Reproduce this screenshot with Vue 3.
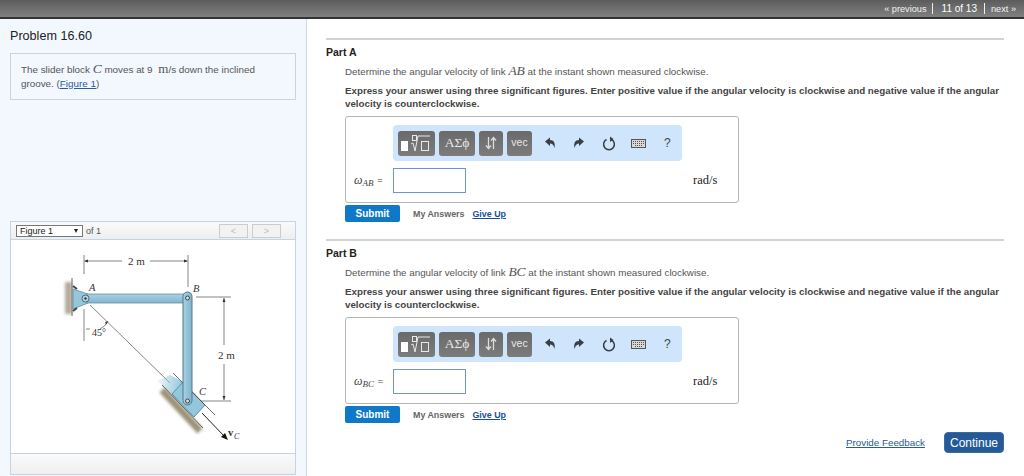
<template>
  <div class="page">
    <div class="topbar">
      <span class="nav-link">« previous</span>
      <span class="sep sep-first"></span>
      <span class="count">11 of 13</span>
      <span class="sep sep-last"></span>
      <span class="nav-link">next »</span>
    </div>

    <div class="columns">
      <aside class="left">
        <h1>Problem 16.60</h1>
        <div class="statement">
          The slider block <i class="math">C</i> moves at 9 <span class="unit">m</span>/s down the inclined
          groove. (<a class="link">Figure 1</a>)
        </div>

        <div class="figure">
          <div class="figure-head">
            <div class="select"><span>Figure 1</span><span class="caret"></span></div>
            <span class="of">of 1</span>
            <div class="pager">
              <button class="page-btn">&lt;</button>
              <button class="page-btn">&gt;</button>
            </div>
          </div>
          <div class="figure-body">
            <svg class="diagram" width="200" height="210" viewBox="0 0 200 210">
              <defs>
                <linearGradient id="fade" x1="0" y1="0" x2="1" y2="0.1">
                  <stop offset="0" stop-color="#94c6dc" stop-opacity="0.1" />
                  <stop offset="1" stop-color="#94c6dc" />
                </linearGradient>
                <linearGradient id="link-h" x1="0" y1="0" x2="0" y2="1">
                  <stop offset="0" stop-color="#a9d2e4" />
                  <stop offset="1" stop-color="#80b5cf" />
                </linearGradient>
                <linearGradient id="link-v" x1="0" y1="0" x2="1" y2="0">
                  <stop offset="0" stop-color="#a9d2e4" />
                  <stop offset="1" stop-color="#7fb3cc" />
                </linearGradient>
                <filter id="blur" x="-30%" y="-30%" width="160%" height="160%">
                  <feGaussianBlur stdDeviation="1.800" />
                </filter>
              </defs>
              <!-- dimensions on top -->
              <g stroke="#666" stroke-width="0.8" fill="none">
                <path d="M34 10V29M138 10V42M35 16H72M100 16H137" />
                <path d="M34 64V96M36 84H40" />
                <path d="M146 52H181M145 156H181M174 53V100M174 119V155" />
                <path d="M40 60L120 138" />
                <path d="M50 84Q55 82 58 76" />
              </g>
              <path d="M34 16l4-1.500v3zM138 16l-4-1.500v3zM174 53l-1.500 4h3zM174 155l-1.500-4h3zM58 76l-3 1.500 1.500 2z" fill="#333" />
              <!-- wall and pin bracket -->
              <rect x="15" y="37" width="7" height="32" fill="#b3ab9c" filter="url(#blur)" />
              <path d="M22 33V71" stroke="#666" stroke-width="1" />
              <path d="M23 44L38 49V58L23 64Z" fill="#94c6dc" stroke="#5f8ea3" stroke-width="0.8" />
              <path d="M23 41l4 3M23 66l4-3" stroke="#444" stroke-width="2" />
              <!-- slider groove -->
              <path d="M112 145L150 186" stroke="#9c9378" stroke-width="7" filter="url(#blur)" fill="none" />
              <path d="M107 136L120 130L133 137L122 149Z" fill="url(#fade)" />
              <path d="M122 149L133 137L155 160L144 172Z" fill="#94c6dc" stroke="#3f7f98" stroke-width="0.8" />
              <path d="M123 128L165 170M112 140L153 183" stroke="#444" stroke-width="0.8" fill="none" />
              <path d="M152 168L175 192" stroke="#222" stroke-width="1" />
              <path d="M178 195l-7-3 4-4z" fill="#111" />
              <!-- links -->
              <path d="M37 49H137V58H37Z" fill="url(#link-h)" stroke="#66909f" stroke-width="0.8" />
              <rect x="133" y="47" width="9" height="113" rx="4.500" fill="url(#link-v)" stroke="#50798a" stroke-width="1" />
              <circle cx="35.500" cy="53.500" r="3.500" fill="#b9d8e6" stroke="#4d6b78" />
              <circle cx="35.500" cy="53.500" r="1.200" fill="#333" />
              <circle cx="137.500" cy="53" r="2" fill="#ddd" stroke="#444" />
              <circle cx="137.500" cy="156" r="2" fill="#ddd" stroke="#444" />
              <!-- labels -->
              <g class="fig-text">
                <text x="78" y="20">2 m</text>
                <text x="168" y="114">2 m</text>
                <text class="fig-angle" x="42" y="91">45°</text>
                <text class="fig-it" x="39" y="46">A</text>
                <text class="fig-it" x="143" y="47">B</text>
                <text class="fig-it" x="149" y="150">C</text>
                <text class="fig-bold" x="178" y="191">v</text>
                <text class="fig-sub" x="184" y="194">C</text>
              </g>
            </svg>
          </div>
          <div class="figure-foot"></div>
        </div>
      </aside>

      <main class="right">
        <section v-for="part in parts" :key="part.name" class="part">
          <h2>Part {{ part.name }}</h2>
          <div class="part-body">
            <p class="question">
              Determine the angular velocity of link <i class="math">{{ part.link }}</i> at the instant shown measured clockwise.
            </p>
            <p class="instructions">
              Express your answer using three significant figures. Enter positive value if the angular velocity is clockwise and negative value if the angular velocity is counterclockwise.
            </p>
            <div class="answer-box">
              <div class="toolbar">
                <button class="tool tool-frac">
                  <span class="block"></span>
                  <svg width="22" height="19" viewBox="0 0 22 19" fill="none" stroke="#e8e8e8" stroke-width="1">
                    <rect x="2.500" y="1.500" width="4" height="5" />
                    <path d="M1 10l2 -1 2 8 3-15h12" />
                    <rect x="11.500" y="7.500" width="7" height="9" />
                  </svg>
                </button>
                <button class="tool tool-greek">ΑΣϕ</button>
                <button class="tool tool-arrows">
                  <svg width="12" height="14" viewBox="0 0 12 14" fill="none" stroke="#ddd" stroke-width="1.300">
                    <path d="M3.500 1V12M1 9.500l2.500 3 2.500-3M8.500 13V2M6 4.500l2.500-3 2.500 3" />
                  </svg>
                </button>
                <button class="tool tool-vec">vec</button>
                <svg class="act act-undo" width="12" height="12" viewBox="0 0 12 12"><path d="M1 4.500L6 0.500V3C10 3 11.500 6.500 10.500 11C9.500 7.500 8 6.500 6 6.500V9Z" fill="#3a3f45" /></svg>
                <svg class="act" width="12" height="12" viewBox="0 0 12 12"><path d="M11 4.500L6 0.500V3C2 3 0.500 6.500 1.500 11C2.500 7.500 4 6.500 6 6.500V9Z" fill="#3a3f45" /></svg>
                <svg class="act" width="14" height="15" viewBox="0 0 14 15" fill="none"><path d="M4.500 3.500A5.400 5.400 0 1 0 9.500 3.500" stroke="#3a3f45" stroke-width="1.500" /><path d="M8 0.500V6L11.500 3Z" fill="#3a3f45" /></svg>
                <svg class="act act-keys" width="15" height="9" viewBox="0 0 15 9"><rect x="0.500" y="0.500" width="14" height="8" fill="#d8d8d8" stroke="#555" /><path d="M2 2.500H13M2 4.500H13M4 6.500H11" stroke="#555" stroke-dasharray="1 1" /></svg>
                <span class="help">?</span>
              </div>
              <div class="answer-row">
                <span class="var"><i class="omega">ω</i><i class="sub">{{ part.link }}</i> =</span>
                <div class="input"></div>
                <span class="units">rad/s</span>
              </div>
            </div>
            <div class="actions">
              <button class="submit">Submit</button>
              <span class="my-answers">My Answers</span>
              <a class="link give-up">Give Up</a>
            </div>
          </div>
        </section>
        <div class="feedback">
          <a class="link">Provide Feedback</a>
          <button class="continue">Continue</button>
        </div>
      </main>
    </div>
  </div>
</template>

<script setup>
const parts = [
  { name: 'A', link: 'AB' },
  { name: 'B', link: 'BC' }
]
</script>

<style>
body {
  margin: 0;
  background: #fff;
}
</style>

<style scoped>
.page {
  width: 1024px;
  height: 476px;
  overflow: hidden;
  font-family: "Liberation Sans", Arial, sans-serif;
  color: #444;
}

.topbar {
  height: 17px;
  border-bottom: 2px solid #333;
  background: linear-gradient(#5c5c5c, #808080);
  display: flex;
  align-items: center;
  justify-content: flex-end;
  padding-right: 8px;
  font-size: 9.200px;
  color: #fff;
}

.nav-link {
  color: #f2f2f2;
}

.count {
  font-size: 10px;
}

.sep {
  width: 1px;
  height: 11px;
  background: #eee;
}

.sep-first {
  margin: 0 9px 0 5px;
}

.sep-last {
  margin: 0 6px 0 7px;
}

.columns {
  display: flex;
  height: 457px;
}

.left {
  width: 307px;
  flex: none;
  box-sizing: border-box;
  border-right: 1px solid #cfdbe8;
  background: #f3f8fe;
  padding: 10px 10px 0;
  display: flex;
  flex-direction: column;
}

.left h1 {
  margin: 0;
  font-size: 12.600px;
  font-weight: 400;
  line-height: 15px;
  color: #222;
}

.statement {
  margin-top: 9px;
  width: 286px;
  height: 47px;
  box-sizing: border-box;
  border: 1px solid #c5d3e3;
  padding: 9px 10px;
  font-size: 9.850px;
  line-height: 13.500px;
  color: #555;
}

.math {
  font-family: "Liberation Serif", serif;
  font-style: italic;
  font-size: 13.500px;
  line-height: 12px;
}

.unit {
  font-family: "Liberation Serif", serif;
  font-size: 13px;
  line-height: 12px;
  margin-left: 3px;
}

.link {
  color: #2a5a9f;
  text-decoration: underline;
}

.figure {
  margin-top: 121px;
  width: 286px;
  border: 1px solid #c5d3e3;
  border-bottom: none;
  box-sizing: border-box;
  background: #fff;
}

.figure-head {
  height: 18px;
  box-sizing: border-box;
  border-bottom: 1px solid #c5d3e3;
  background: linear-gradient(#fafafa, #eeeeee);
  display: flex;
  align-items: center;
  padding-left: 5px;
  font-size: 9px;
}

.select {
  width: 67px;
  height: 12px;
  box-sizing: border-box;
  border: 1px solid #777;
  background: #fff;
  display: flex;
  justify-content: space-between;
  align-items: center;
  padding: 0 4px 0 3px;
  color: #222;
}

.caret {
  width: 0;
  height: 0;
  border-left: 2.500px solid transparent;
  border-right: 2.500px solid transparent;
  border-top: 4px solid #222;
}

.of {
  margin-left: 3px;
  color: #555;
}

.pager {
  margin-left: auto;
  margin-right: 14px;
  display: flex;
  gap: 4px;
}

.page-btn {
  width: 29px;
  height: 14px;
  padding: 0;
  border: 1px solid #ccc;
  background: #f2f2f2;
  color: #bbb;
  font-size: 9px;
  line-height: 10px;
  font-family: inherit;
}

.figure-body {
  height: 214px;
  box-sizing: border-box;
  border-bottom: 1px solid #c5d3e3;
  padding: 5px 0 0 39px;
}

.diagram {
  display: block;
}

.fig-text text {
  font-family: "Liberation Serif", serif;
  font-size: 11px;
  fill: #333;
}

.fig-text .fig-angle {
  font-size: 10px;
}

.fig-text .fig-it {
  font-style: italic;
  font-size: 10.500px;
}

.fig-text .fig-bold {
  font-weight: 700;
  font-size: 10.500px;
}

.fig-text .fig-sub {
  font-style: italic;
  font-size: 8px;
}

.figure-foot {
  height: 20px;
  background: linear-gradient(#fafafa, #efefef);
  border-bottom: 1px solid #c5d3e3;
}

.right {
  width: 678px;
  margin-left: 19px;
  padding-top: 19px;
  flex: none;
}

.part {
  border-top: 2px solid #d3d3d3;
  height: 201px;
  box-sizing: border-box;
  padding-top: 6px;
}

.part h2 {
  margin: 0;
  font-size: 10.500px;
  line-height: 13px;
  font-weight: 700;
  color: #222;
}

.part-body {
  padding-left: 19px;
}

.question {
  margin: 6px 0 0;
  font-size: 9.800px;
  line-height: 14px;
  color: #555;
}

.instructions {
  margin: 5px 0 0;
  font-size: 9.750px;
  line-height: 13px;
  font-weight: 700;
  color: #444;
}

.answer-box {
  margin-top: 6px;
  width: 394px;
  height: 87px;
  box-sizing: border-box;
  border: 1px solid #b5b5b5;
  border-radius: 3px;
  padding: 8px 0 0 47px;
}

.toolbar {
  width: 289px;
  height: 36px;
  box-sizing: border-box;
  background: #cfe5fc;
  border-radius: 4px;
  padding: 5px;
  display: flex;
  align-items: center;
  gap: 4px;
}

.tool {
  flex: none;
  height: 25px;
  padding: 0;
  border: none;
  border-radius: 3px;
  background: linear-gradient(#6a6a6a, #7c7c7c);
  color: #e8e8e8;
  display: flex;
  align-items: center;
  justify-content: center;
}

.tool-frac {
  width: 37px;
  gap: 2px;
}

.block {
  width: 7px;
  height: 10px;
  background: #fff;
  margin-top: 5px;
}

.tool-greek {
  width: 36px;
  font-family: "Liberation Serif", "DejaVu Serif", serif;
  font-size: 13.500px;
}

.tool-arrows {
  width: 24px;
}

.tool-vec {
  width: 25px;
  font-family: "Liberation Sans", sans-serif;
  font-size: 10.500px;
  padding-bottom: 3px;
}

.act {
  flex: none;
  margin-left: 13px;
}

.act-undo {
  margin-left: 8px;
}

.act-keys {
  margin-left: 11px;
}

.help {
  margin-left: 14px;
  font-size: 12px;
  color: #444;
}

.answer-row {
  position: relative;
  margin-top: 7px;
  height: 25px;
  display: flex;
  align-items: center;
}

.var {
  position: absolute;
  left: -39px;
  top: 5px;
  font-family: "Liberation Serif", serif;
  font-size: 10px;
  color: #444;
  white-space: nowrap;
}

.omega {
  font-size: 12px;
}

.sub {
  font-size: 9px;
  position: relative;
  top: 2px;
  margin-right: 1px;
}

.input {
  width: 73px;
  height: 25px;
  box-sizing: border-box;
  border: 1px solid #6f95d8;
}

.units {
  margin-left: 227px;
  font-family: "Liberation Serif", serif;
  font-size: 12.500px;
  color: #222;
}

.actions {
  margin-top: 2px;
  display: flex;
  align-items: center;
  height: 17px;
  font-size: 8.900px;
}

.submit {
  width: 55px;
  height: 17px;
  padding: 0;
  border: none;
  border-radius: 2px;
  background: #0f78c8;
  color: #fff;
  font-family: inherit;
  font-size: 10px;
  font-weight: 700;
}

.my-answers {
  margin-left: 13px;
  font-weight: 700;
  color: #666;
}

.give-up {
  margin-left: 8px;
  font-weight: 700;
  color: #1c4f9c;
}

.feedback {
  margin-top: -8px;
  display: flex;
  justify-content: flex-end;
  align-items: center;
  gap: 19px;
  font-size: 9.800px;
}

.continue {
  width: 60px;
  height: 21px;
  padding: 0;
  border: 1px solid #3e6a9c;
  border-radius: 4px;
  background: #255a99;
  color: #fff;
  font-family: inherit;
  font-size: 12px;
}
</style>
